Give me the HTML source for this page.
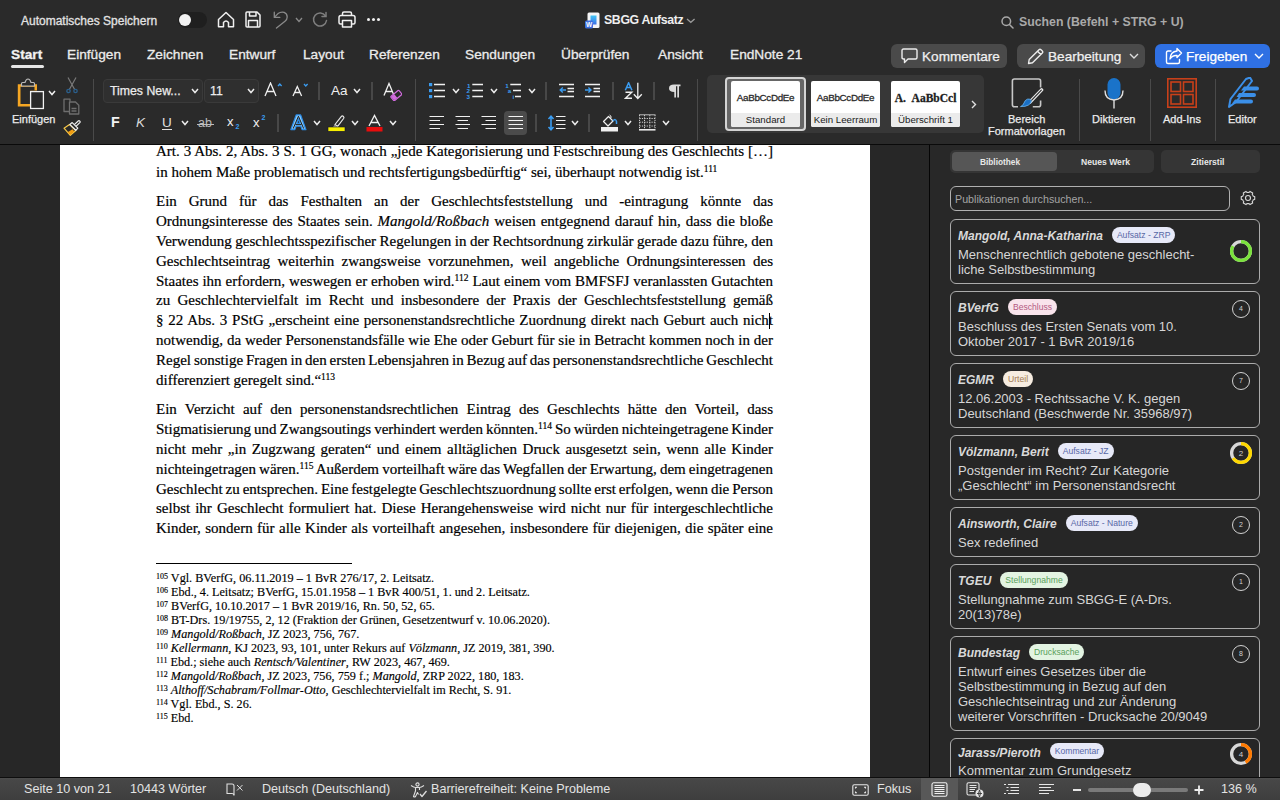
<!DOCTYPE html>
<html><head><meta charset="utf-8">
<style>
*{box-sizing:border-box;margin:0;padding:0}
html,body{width:1280px;height:800px;overflow:hidden;background:#282828;font-family:"Liberation Sans",sans-serif;color:#e6e6e6}
.abs{position:absolute}
#top{position:absolute;left:0;top:0;width:1280px;height:144px;background:#2a2a2a}
#blk{position:absolute;left:0;top:144px;width:1280px;height:1px;background:#0a0a0a}
#canvas{position:absolute;left:0;top:145px;width:929px;height:632px;background:#272727;overflow:hidden}
#page{position:absolute;left:60px;top:0;width:810px;height:640px;background:#fff;color:#000;font-family:"Liberation Serif",serif}
#sep{position:absolute;left:929px;top:145px;width:1px;height:632px;background:#050505}
#side{position:absolute;left:930px;top:145px;width:350px;height:632px;background:#282828;overflow:hidden}
#status{position:absolute;left:0;top:777px;width:1280px;height:23px;background:linear-gradient(#4d4d4d,#474747 2px,#3e3e3e);border-top:1px solid #0e0e0e}
.t{position:absolute;white-space:nowrap}
.ln{position:absolute;left:96px;width:617px;white-space:nowrap;font-size:15px;line-height:20px;height:20px;-webkit-text-stroke:.2px #000}
.j{text-align:justify;text-align-last:justify}
sup{font-size:9.5px;vertical-align:5px;line-height:0}
.fn{position:absolute;left:96px;white-space:nowrap;font-size:12.2px;line-height:14px;-webkit-text-stroke:.15px #000}
.fn sup{font-size:8px;vertical-align:3.5px}
.ui{font-family:"Liberation Sans",sans-serif}
.tab{top:47px;font-size:13.7px;color:#ececec;-webkit-text-stroke:.3px #ececec}
.btn{top:44px;height:24px;border-radius:6px;background:#4a4a4a}
.btxt{top:49px;-webkit-text-stroke:.25px currentColor;font-size:13.6px;color:#f0f0f0}
.rl{font-size:11px;color:#ececec;-webkit-text-stroke:.25px #ececec}
.vsep{position:absolute;width:1px;background:#4a4a4a}
.chev{fill:none;stroke:#ececec;stroke-width:1.5}
.sty{position:absolute;top:81px;width:69px;height:46px;background:#fff;border-radius:2px;overflow:hidden}
.sty .pv{position:absolute;left:0;top:10.5px;width:69px;text-align:center;font-size:9.8px;color:#2a2a2a;font-family:"Liberation Sans",sans-serif;letter-spacing:-0.3px;-webkit-text-stroke:.3px #2a2a2a}
.sty .lb{position:absolute;left:0;top:31.5px;width:69px;height:14.5px;background:#ebebeb;text-align:center;font-size:9.7px;line-height:14px;color:#1a1a1a;font-family:"Liberation Sans",sans-serif}
.sbt{font-size:8.6px;font-weight:bold;color:#e8e8e8;text-align:center;line-height:19px}
.card{position:absolute;width:310px;border:1.5px solid #ababab;border-radius:6px;background:#262626}
.auth{font-size:12px;font-weight:bold;font-style:italic;color:#d9d9d9;line-height:16px}
.badge{display:inline-block;vertical-align:top;margin-left:9px;margin-top:-1.5px;height:16.4px;line-height:16.4px;padding:0 5px;border-radius:8px;font-size:8.6px;font-weight:normal;font-style:normal}
.blue{background:#e7e9f8;color:#5767a6}
.pink{background:#f9e4ec;color:#b35a82}
.beige{background:#f6ece0;color:#a27b53}
.green{background:#e3f4e2;color:#59a05a}
.ctit{font-size:13px;color:#d6d6d6;line-height:15px}
.circ{position:absolute;width:18px;height:18px;border-radius:9px;border:1px solid #d2d2d2;font-size:7px;line-height:16px;text-align:center;color:#d2d2d2}
.stx{top:4px;font-size:12.6px;color:#e3e3e3;line-height:15px}
</style></head><body>
<div id="top">
<!-- title bar -->
<div class="t ui" style="left:21px;top:14px;font-size:12px;color:#e2e2e2;-webkit-text-stroke:.3px #e2e2e2">Automatisches Speichern</div>
<div class="abs" style="left:178px;top:12px;width:29px;height:16px;border-radius:8px;background:#1f1f1f"></div>
<div class="abs" style="left:179px;top:14px;width:12px;height:12px;border-radius:6px;background:#f2f2f2"></div>
<svg class="abs" style="left:217px;top:11px" width="18" height="17" viewBox="0 0 18 17" fill="none" stroke="#f0f0f0" stroke-width="1.5" stroke-linejoin="round"><path d="M1.5 8.5 L9 1.5 L16.5 8.5 V15.8 H11.5 V11.5 Q9 8.5 6.5 11.5 V15.8 H1.5 Z"/></svg>
<svg class="abs" style="left:245px;top:11px" width="16" height="17" viewBox="0 0 16 17" fill="none" stroke="#f0f0f0" stroke-width="1.5" stroke-linejoin="round"><path d="M1 2 Q1 1 2 1 H12 L15 4 V15 Q15 16 14 16 H2 Q1 16 1 15 Z"/><path d="M4.5 1 V5 H11 V1"/><path d="M3.5 16 V9.5 H12.5 V16"/></svg>
<svg class="abs" style="left:272px;top:11px" width="17" height="18" viewBox="0 0 17 18" fill="none" stroke="#8a8a8a" stroke-width="1.3" stroke-linecap="round" stroke-linejoin="round"><path d="M2.3 1.2 V6.4 H7.8"/><path d="M2.6 6.1 L6 2.6 Q9 0.4 12.2 1.4 Q15.2 2.8 15.2 6 Q15.2 8.6 13 10.2 L4.5 17"/></svg>
<svg class="abs" style="left:295px;top:17px" width="8" height="6" viewBox="0 0 8 6" fill="none" stroke="#8a8a8a" stroke-width="1.3"><path d="M1 1 L4 4.5 L7 1"/></svg>
<svg class="abs" style="left:312px;top:11px" width="16" height="17" viewBox="0 0 16 17" fill="none" stroke="#7e7e7e" stroke-width="1.5" stroke-linecap="round"><path d="M13.5 5 A6.5 6.5 0 1 0 14.5 9.5"/><path d="M14 1.5 V5.5 H10"/></svg>
<svg class="abs" style="left:338px;top:11px" width="18" height="17" viewBox="0 0 18 17" fill="none" stroke="#f0f0f0" stroke-width="1.5" stroke-linejoin="round"><path d="M4.5 4.5 V2.5 Q4.5 1 6 1 H12 Q13.5 1 13.5 2.5 V4.5"/><path d="M4 13 H2.5 Q1 13 1 11.5 V6.5 Q1 4.5 3 4.5 H15 Q17 4.5 17 6.5 V11.5 Q17 13 15.5 13 H14"/><path d="M4.5 9.5 H13.5 V16 H4.5 Z"/></svg>
<div class="abs" style="left:367px;top:18px;width:3px;height:3px;border-radius:2px;background:#f0f0f0;box-shadow:5px 0 0 #f0f0f0,10px 0 0 #f0f0f0"></div>
<svg class="abs" style="left:585px;top:12px" width="15" height="17" viewBox="0 0 15 17"><defs><linearGradient id="wg" x1="0" y1="0" x2="0" y2="1"><stop offset="0" stop-color="#41c6f5"/><stop offset="1" stop-color="#3a6ee8"/></linearGradient></defs><rect x="2.5" y="0.5" width="12" height="15.5" rx="1.5" fill="#f4f4f6"/><rect x="5.5" y="3.5" width="6" height="9" fill="url(#wg)"/><rect x="0" y="8.5" width="8" height="8" rx="1.5" fill="#3d6fe0"/><text x="4" y="15.3" font-size="6.5" font-family="Liberation Sans" font-weight="bold" fill="#fff" text-anchor="middle">W</text></svg>
<div class="t ui" style="left:604px;top:13px;font-size:12.3px;color:#efefef;font-weight:bold;letter-spacing:-0.35px">SBGG Aufsatz</div>
<svg class="abs" style="left:686px;top:17.5px" width="10" height="6" viewBox="0 0 10 6" fill="none" stroke="#9a9a9a" stroke-width="1.3"><path d="M1 1 L4.8 4.3 L8.6 1"/></svg>
<svg class="abs" style="left:1001px;top:15.5px" width="13" height="13" viewBox="0 0 13 13" fill="none" stroke="#a8a8a8" stroke-width="1.5" stroke-linecap="round"><circle cx="5.3" cy="5.3" r="4.3"/><path d="M8.5 8.5 L12 12"/></svg>
<div class="t ui" style="left:1019px;top:15px;font-size:12.3px;color:#a9a9a9;font-weight:bold">Suchen (Befehl + STRG + U)</div>
<!-- tabs -->
<div class="t ui tab" style="left:11px;font-weight:bold;color:#f4f4f4">Start</div>
<div class="abs" style="left:11px;top:65px;width:33px;height:3px;border-radius:2px;background:#e6e6e6"></div>
<div class="t ui tab" style="left:67px">Einfügen</div>
<div class="t ui tab" style="left:147px">Zeichnen</div>
<div class="t ui tab" style="left:229px">Entwurf</div>
<div class="t ui tab" style="left:303px">Layout</div>
<div class="t ui tab" style="left:369px">Referenzen</div>
<div class="t ui tab" style="left:465px">Sendungen</div>
<div class="t ui tab" style="left:561px">Überprüfen</div>
<div class="t ui tab" style="left:658px">Ansicht</div>
<div class="t ui tab" style="left:730px">EndNote 21</div>
<div class="abs btn" style="left:891px;width:116px"></div>
<svg class="abs" style="left:901px;top:48px" width="17" height="16" viewBox="0 0 17 16" fill="none" stroke="#ececec" stroke-width="1.4" stroke-linejoin="round"><path d="M2.5 1 H14.5 Q16 1 16 2.5 V9.5 Q16 11 14.5 11 H7 L3.5 14.5 V11 H2.5 Q1 11 1 9.5 V2.5 Q1 1 2.5 1 Z"/></svg>
<div class="t ui btxt" style="left:922px">Kommentare</div>
<div class="abs btn" style="left:1017px;width:128px"></div>
<svg class="abs" style="left:1027px;top:48px" width="17" height="17" viewBox="0 0 17 17" fill="none" stroke="#ececec" stroke-width="1.4" stroke-linejoin="round"><path d="M1.5 15.5 L2.2 11.5 L12 1.7 Q13 0.8 14 1.7 L15.3 3 Q16.2 4 15.3 5 L5.5 14.8 Z M10.5 3.2 L13.8 6.5"/></svg>
<div class="t ui btxt" style="left:1048px">Bearbeitung</div>
<svg class="abs" style="left:1129px;top:53px" width="10" height="7" viewBox="0 0 10 7" fill="none" stroke="#dcdcdc" stroke-width="1.4"><path d="M1 1 L5 5 L9 1"/></svg>
<div class="abs btn" style="left:1155px;width:115px;background:#2f70e3"></div>
<svg class="abs" style="left:1165px;top:47px" width="18" height="18" viewBox="0 0 18 18" fill="none" stroke="#fff" stroke-width="1.4" stroke-linejoin="round" stroke-linecap="round"><path d="M6 4 H3 Q1.5 4 1.5 5.5 V15 Q1.5 16.5 3 16.5 H13 Q14.5 16.5 14.5 15 V12.5"/><path d="M16.5 6 L12 1.5 V4 Q5.5 4.5 5 12 Q7.5 8 12 8.5 V10.5 Z"/></svg>
<div class="t ui btxt" style="left:1186px;color:#fff">Freigeben</div>
<!-- ribbon group 1: clipboard -->
<svg class="abs" style="left:15px;top:78px" width="31" height="32" viewBox="0 0 31 32" fill="none"><path d="M3 5.5 H7 V29 H3 Z" fill="none"/><path d="M2.8 6.2 H22 V12.5 H15.5 V28.5 H2.8 Z" fill="#f5a623" stroke="none"/><path d="M5.5 8.7 H19.5 V12.5 H15.5 V26 H5.5 Z" fill="#2a2a2a"/><path d="M6.5 8 V5.5 Q6.5 4.5 7.5 4.5 H10 Q11 1 13 1 Q15 1 16 4.5 H18.5 Q19.5 4.5 19.5 5.5 V8 Z" fill="#2a2a2a" stroke="#b8b8b8" stroke-width="1.2" stroke-linejoin="round"/><rect x="15.6" y="13.6" width="12.8" height="16.9" fill="#2a2a2a" stroke="#f2f2f2" stroke-width="1.3"/></svg>
<svg class="abs" style="left:48px;top:90px" width="8" height="6" viewBox="0 0 8 6" fill="none" stroke="#f0f0f0" stroke-width="1.5"><path d="M1 1 L4 4.5 L7 1"/></svg>
<div class="t ui rl" style="left:12px;top:113px">Einfügen</div>
<svg class="abs" style="left:65px;top:77px" width="14" height="17" viewBox="0 0 14 17" fill="none" stroke-width="1.2"><path d="M3 0.5 L9.5 12.3 M11 0.5 L4.5 12.3" stroke="#7a7a7a"/><circle cx="3.5" cy="14" r="1.7" stroke="#2b5f8c" stroke-width="1.3"/><circle cx="10.5" cy="14" r="1.7" stroke="#2b5f8c" stroke-width="1.3"/></svg>
<svg class="abs" style="left:63px;top:98px" width="17" height="17" viewBox="0 0 17 17" fill="none" stroke="#6e6e6e" stroke-width="1.3" stroke-linejoin="round"><path d="M7 3.5 V1.2 H1 V13.5 H6.5"/><path d="M6.5 4 H12.5 L15.8 7.3 V16 H6.5 Z M8.5 10.5 H13.5 M8.5 13 H13.5"/></svg>
<svg class="abs" style="left:62px;top:120px" width="20" height="17" viewBox="0 0 20 17"><path d="M2 8.2 L7.5 4.6 L13.8 10.5 L8.3 15.3 Z" fill="#2a2a2a" stroke="#f7c948" stroke-width="1.2" stroke-linejoin="round"/><path d="M5.5 12.2 L10.5 9.3 L12.3 11.6 L8.4 14.8 Z" fill="#f29d12"/><path d="M7.8 4.4 L10.2 2.6 L15.8 8.2 L13.8 10.3 Z" fill="#2a2a2a" stroke="#f0f0f0" stroke-width="1.2" stroke-linejoin="round"/><path d="M12.3 4.6 L16.2 1 Q17 0.4 17.8 1.1 Q18.5 1.9 17.8 2.7 L14 6.4" fill="none" stroke="#f0f0f0" stroke-width="1.2"/></svg>
<div class="vsep" style="left:93px;top:79px;height:62px"></div>
<!-- font group -->
<div class="abs" style="left:103px;top:79px;width:100px;height:24px;border-radius:4px;background:#2f2f2f;border:1px solid #3a3a3a"></div>
<div class="t ui" style="left:110px;top:84px;font-size:12.3px;color:#ececec;-webkit-text-stroke:.25px #ececec">Times New...</div>
<svg class="abs chev" style="left:191px;top:88px" width="8" height="6" viewBox="0 0 8 6"><path d="M1 1 L4 4.5 L7 1"/></svg>
<div class="abs" style="left:204px;top:79px;width:55px;height:24px;border-radius:4px;background:#2f2f2f;border:1px solid #3a3a3a"></div>
<div class="t ui" style="left:210px;top:84px;font-size:12.3px;color:#ececec;-webkit-text-stroke:.25px #ececec">11</div>
<svg class="abs chev" style="left:247px;top:88px" width="8" height="6" viewBox="0 0 8 6"><path d="M1 1 L4 4.5 L7 1"/></svg>
<svg class="abs" style="left:264px;top:82px" width="19" height="15" viewBox="0 0 19 15" fill="none" stroke-width="1.3"><path d="M1 14 L6.5 1 L12 14 M3 9.5 H10" stroke="#f0f0f0"/><path d="M14 4 L15.8 2 L17.6 4" stroke="#3b9cf0"/></svg>
<svg class="abs" style="left:292px;top:82px" width="17" height="15" viewBox="0 0 17 15" fill="none" stroke-width="1.3"><path d="M1 14 L5.3 4.5 L9.6 14 M2.8 10.5 H7.8" stroke="#f0f0f0"/><path d="M12 2 L13.8 4 L15.6 2" stroke="#3b9cf0"/></svg>
<div class="vsep" style="left:318px;top:82px;height:18px;width:2px;background:#484848"></div>
<div class="t ui" style="left:331px;top:83px;font-size:13.5px;color:#efefef">Aa</div>
<svg class="abs chev" style="left:353px;top:88px" width="8" height="6" viewBox="0 0 8 6"><path d="M1 1 L4 4.5 L7 1"/></svg>
<div class="vsep" style="left:371px;top:82px;height:18px;width:2px;background:#484848"></div>
<svg class="abs" style="left:383px;top:82px" width="19" height="19" viewBox="0 0 19 19" fill="none"><path d="M1 13.5 L6 1.5 L11 13.5 M2.8 9.5 H9" stroke="#f0f0f0" stroke-width="1.3"/><g transform="rotate(-40 13 13.5)"><rect x="8" y="11" width="10.5" height="5.5" rx="0.8" fill="#2a2a2a" stroke="#d26be0" stroke-width="1.2"/><rect x="8.5" y="11.5" width="4" height="4.5" fill="#d26be0"/></g></svg>
<!-- row 2 -->
<div class="t ui" style="left:111px;top:114px;font-size:14.3px;font-weight:bold;color:#f2f2f2">F</div>
<div class="t ui" style="left:136px;top:114.5px;font-size:13.5px;font-style:italic;color:#d8d8d8">K</div>
<div class="t ui" style="left:162px;top:114.5px;font-size:13.5px;color:#e0e0e0">U</div>
<div class="abs" style="left:162px;top:128.5px;width:10px;height:1.3px;background:#e0e0e0"></div>
<svg class="abs chev" style="left:181px;top:120px" width="8" height="6" viewBox="0 0 8 6"><path d="M1 1 L4 4.5 L7 1"/></svg>
<div class="t ui" style="left:198px;top:116px;font-size:12.5px;color:#bdbdbd">ab</div>
<div class="abs" style="left:197px;top:123.5px;width:17px;height:1.2px;background:#bdbdbd"></div>
<div class="t ui" style="left:227px;top:114px;font-size:13px;color:#f2f2f2">x</div>
<div class="t ui" style="left:235.5px;top:123px;font-size:7px;color:#3b9cf0;font-weight:bold">2</div>
<div class="t ui" style="left:253px;top:115px;font-size:13px;color:#f2f2f2">x</div>
<div class="t ui" style="left:261.5px;top:113.5px;font-size:7px;color:#3b9cf0;font-weight:bold">2</div>
<div class="vsep" style="left:277px;top:114px;height:18px;width:2px;background:#484848"></div>
<svg class="abs" style="left:290px;top:114px" width="17" height="17" viewBox="0 0 17 17"><path d="M0.9 15.6 L6.2 0.9 H10.6 L15.9 15.6 H12.1 L10.9 12.2 H6 L4.8 15.6 Z M6.9 9.3 H10 L8.45 4.6 Z" fill="#8ccdfc" fill-rule="evenodd" stroke="#2b8be6" stroke-width="1.3" stroke-linejoin="round"/><path d="M3.2 14.6 L8.45 2.2 L13.7 14.6 M5.4 10.6 H11.5" fill="none" stroke="#1c1c1c" stroke-width="1"/></svg>
<svg class="abs chev" style="left:313px;top:120px" width="8" height="6" viewBox="0 0 8 6"><path d="M1 1 L4 4.5 L7 1"/></svg>
<svg class="abs" style="left:327px;top:114px" width="19" height="18" viewBox="0 0 19 18"><path d="M8 10.5 L14.2 2.6 Q15.2 1.5 16.4 2.4 Q17.4 3.4 16.6 4.5 L10.6 12.3 Z" fill="#2a2a2a" stroke="#e8e8e8" stroke-width="1.2" stroke-linejoin="round"/><path d="M7.8 10.8 L10.4 12.6 L8.6 14 L5 14 Z" fill="#9a9a9a"/><rect x="1" y="13" width="17" height="4.3" fill="#f7ef00" stroke="#15152a" stroke-width="0.6"/></svg>
<svg class="abs chev" style="left:351px;top:120px" width="8" height="6" viewBox="0 0 8 6"><path d="M1 1 L4 4.5 L7 1"/></svg>
<svg class="abs" style="left:366px;top:114px" width="17" height="18" viewBox="0 0 17 18"><path d="M3 12 L8.5 1.5 L14 12 M5 8.5 H12" fill="none" stroke="#f0f0f0" stroke-width="1.3"/><rect x="0.5" y="13" width="16" height="4.5" fill="#e80c0c"/></svg>
<svg class="abs chev" style="left:389px;top:120px" width="8" height="6" viewBox="0 0 8 6"><path d="M1 1 L4 4.5 L7 1"/></svg>
<div class="vsep" style="left:415px;top:79px;height:62px"></div>
<!-- paragraph group -->
<svg class="abs" style="left:429px;top:83px" width="17" height="16" viewBox="0 0 17 16"><g fill="#3b9cf0"><rect x="0" y="0" width="3.2" height="3.2"/><rect x="0" y="6" width="3.2" height="3.2"/><rect x="0" y="12" width="3.2" height="3.2"/></g><g stroke="#f0f0f0" stroke-width="1.3"><path d="M5 1.5 H16 M5 7.5 H16 M5 13.5 H16"/></g></svg>
<svg class="abs chev" style="left:452px;top:88px" width="8" height="6" viewBox="0 0 8 6"><path d="M1 1 L4 4.5 L7 1"/></svg>
<svg class="abs" style="left:466px;top:82px" width="18" height="18" viewBox="0 0 18 18"><g font-size="6.2" font-family="Liberation Sans" font-weight="bold" fill="#3b9cf0"><text x="1" y="5.6">1</text><text x="0.6" y="11.4">2</text><text x="0.6" y="17.2">3</text></g><g stroke="#f0f0f0" stroke-width="1.3"><path d="M6.3 2.5 H17 M6.3 8.5 H17 M6.3 14.5 H17"/></g></svg>
<svg class="abs chev" style="left:490px;top:88px" width="8" height="6" viewBox="0 0 8 6"><path d="M1 1 L4 4.5 L7 1"/></svg>
<svg class="abs" style="left:504px;top:82px" width="18" height="18" viewBox="0 0 18 18"><g font-size="6.2" font-family="Liberation Sans" font-weight="bold" fill="#3b9cf0"><text x="1.2" y="5.6">1</text><text x="3.8" y="11.2">a</text><text x="8.6" y="17.2">i</text></g><g stroke="#f0f0f0" stroke-width="1.3"><path d="M6.3 2.5 H17 M9 8.5 H17 M11 14.5 H17"/></g></svg>
<svg class="abs chev" style="left:528px;top:88px" width="8" height="6" viewBox="0 0 8 6"><path d="M1 1 L4 4.5 L7 1"/></svg>
<div class="vsep" style="left:545px;top:82px;height:18px;width:2px;background:#484848"></div>
<svg class="abs" style="left:559px;top:83px" width="16" height="15" viewBox="0 0 16 15" fill="none"><g stroke="#f0f0f0" stroke-width="1.3"><path d="M0 1.5 H15 M8.5 5.5 H15 M8.5 8.5 H15 M0 13.5 H15"/></g><path d="M7 7 H1.2 M3.8 4.4 L1.2 7 L3.8 9.6" stroke="#3b9cf0" stroke-width="1.4"/></svg>
<svg class="abs" style="left:585px;top:83px" width="16" height="15" viewBox="0 0 16 15" fill="none"><g stroke="#f0f0f0" stroke-width="1.3"><path d="M0 1.5 H15 M8.5 5.5 H15 M8.5 8.5 H15 M0 13.5 H15"/></g><path d="M0 7 H6 M3.4 4.4 L6 7 L3.4 9.6" stroke="#3b9cf0" stroke-width="1.4"/></svg>
<div class="vsep" style="left:612px;top:82px;height:18px;width:2px;background:#484848"></div>
<svg class="abs" style="left:624px;top:82px" width="19" height="18" viewBox="0 0 19 18" fill="none"><path d="M1.3 8.3 L4.6 0.8 L7.9 8.3 M2.5 5.6 H6.7" stroke="#3b9cf0" stroke-width="1.5"/><path d="M1.5 10.2 H7.8 L1.5 16.3 H8" stroke="#f0f0f0" stroke-width="1.4"/><path d="M13.8 0.8 V16.5 M9.8 12.3 L13.8 16.5 L17.8 12.3" stroke="#f0f0f0" stroke-width="1.3"/></svg>
<div class="vsep" style="left:653px;top:82px;height:18px;width:2px;background:#484848"></div>
<svg class="abs" style="left:668px;top:84px" width="13" height="14" viewBox="0 0 13 14"><path d="M6 0.5 H12.5 V2.2 H11 V13.5 H9.3 V2.2 H8 V13.5 H6.3 V8 Q1 8 1 4.2 Q1 0.5 6 0.5 Z" fill="#dcdcdc"/></svg>
<!-- row 2 -->
<svg class="abs" style="left:429px;top:115px" width="16" height="15" viewBox="0 0 16 15" stroke="#f0f0f0" stroke-width="1.2"><path d="M0.5 1.5 H15 M0.5 5.5 H11 M0.5 9.5 H15 M0.5 13.5 H11"/></svg>
<svg class="abs" style="left:455px;top:115px" width="16" height="15" viewBox="0 0 16 15" stroke="#f0f0f0" stroke-width="1.2"><path d="M0.5 1.5 H15 M2.5 5.5 H13 M0.5 9.5 H15 M2.5 13.5 H13"/></svg>
<svg class="abs" style="left:481px;top:115px" width="16" height="15" viewBox="0 0 16 15" stroke="#f0f0f0" stroke-width="1.2"><path d="M0.5 1.5 H15 M4.5 5.5 H15 M0.5 9.5 H15 M4.5 13.5 H15"/></svg>
<div class="abs" style="left:504px;top:111px;width:23px;height:24px;border-radius:4px;background:#4b4b4b"></div>
<svg class="abs" style="left:508px;top:115px" width="16" height="15" viewBox="0 0 16 15" stroke="#f4f4f4" stroke-width="1.2"><path d="M0.5 1.5 H15 M0.5 5.5 H15 M0.5 9.5 H15 M0.5 13.5 H15"/></svg>
<div class="vsep" style="left:535px;top:114px;height:18px;width:2px;background:#484848"></div>
<svg class="abs" style="left:547px;top:115px" width="19" height="16" viewBox="0 0 19 16" fill="none"><path d="M4 1.5 V14.5 M1.5 4 L4 1.2 L6.5 4 M1.5 12 L4 14.8 L6.5 12" stroke="#3b9cf0" stroke-width="1.6"/><g stroke="#f0f0f0" stroke-width="1.2"><path d="M9 1.5 H18.5 M9 5.5 H18.5 M9 9.5 H18.5 M9 13.5 H18.5"/></g></svg>
<svg class="abs chev" style="left:571px;top:120px" width="8" height="6" viewBox="0 0 8 6"><path d="M1 1 L4 4.5 L7 1"/></svg>
<div class="vsep" style="left:588px;top:114px;height:18px;width:2px;background:#484848"></div>
<svg class="abs" style="left:600px;top:114px" width="19" height="18" viewBox="0 0 19 18" fill="none"><path d="M3.5 7.5 L8.5 2.5 L13 7 L8 12 Z" stroke="#f0f0f0" stroke-width="1.2" stroke-linejoin="round"/><path d="M9.5 1 Q11.5 1.5 11 4" stroke="#f0f0f0" stroke-width="1"/><path d="M13 7 Q15.5 4 16.5 7.5 V10" stroke="#3b9cf0" stroke-width="1.5"/><rect x="1" y="13" width="17" height="4.5" fill="#f0f0f0"/></svg>
<svg class="abs chev" style="left:624px;top:120px" width="8" height="6" viewBox="0 0 8 6"><path d="M1 1 L4 4.5 L7 1"/></svg>
<svg class="abs" style="left:639px;top:114px" width="17" height="17" viewBox="0 0 17 17" fill="none"><g stroke="#cfcfcf" stroke-width="1" stroke-dasharray="1.2 1.2"><path d="M0.5 1 V15 M16 1 V15 M5.5 1 V15 M10.8 1 V15 M0.5 4.5 H16 M0.5 12 H16"/></g><path d="M0.5 1 H16 M0.5 8 H16 M8.3 1 V15" stroke="#cfcfcf" stroke-width="0"/><path d="M0.5 8.2 H16" stroke="#d8d8d8" stroke-width="1" stroke-dasharray="1.2 1.2"/><path d="M0 0.8 H16.5" stroke="#bdbdbd" stroke-width="1"/><path d="M0 15.8 H16.5" stroke="#f4f4f4" stroke-width="1.5"/></svg>
<svg class="abs chev" style="left:662px;top:120px" width="8" height="6" viewBox="0 0 8 6"><path d="M1 1 L4 4.5 L7 1"/></svg>
<div class="vsep" style="left:697px;top:79px;height:62px"></div>
<!-- styles gallery -->
<div class="abs" style="left:707px;top:75px;width:277px;height:58px;border-radius:5px;background:#373737"></div>
<div class="abs" style="left:725px;top:77px;width:81px;height:54px;border-radius:4px;border:2px solid #d4d4d4;background:#666"></div>
<div class="sty" style="left:731px"><div class="pv">AaBbCcDdEe</div><div class="lb">Standard</div></div>
<div class="sty" style="left:811px"><div class="pv">AaBbCcDdEe</div><div class="lb">Kein Leerraum</div></div>
<div class="sty" style="left:891px"><div class="pv" style="font-family:'Liberation Serif',serif;font-weight:bold;font-size:11.5px;color:#1a1a1a;letter-spacing:0">A.&nbsp;&nbsp;AaBbCcl</div><div class="lb">Überschrift 1</div></div>
<svg class="abs" style="left:971px;top:100px" width="6" height="9" viewBox="0 0 6 9" fill="none" stroke="#e0e0e0" stroke-width="1.4"><path d="M1 1 L4.5 4.5 L1 8"/></svg>
<!-- right big buttons -->
<svg class="abs" style="left:1011px;top:78px" width="33" height="31" viewBox="0 0 33 31" fill="none"><path d="M29.6 9.5 V3 Q29.6 1 27.6 1 H3.4 Q1.4 1 1.4 3 V26.8 Q1.4 28.8 3.4 28.8 H7 M21.8 28.8 H27.6 Q29.6 28.8 29.6 26.8 V22.6" stroke="#c8c8c8" stroke-width="1.6"/><path d="M30.6 11.9 L18.8 24.2" stroke="#e8e8e8" stroke-width="3.4" stroke-linecap="round"/><path d="M30.3 12.2 L18.8 24.2" stroke="#2a2a2a" stroke-width="1.1" stroke-linecap="round"/><path d="M9.5 28.6 Q14.5 28.8 17.5 27 Q20.8 25 20.2 22.6 Q19.2 20.2 16.3 21.2 Q13.8 22.2 13 25 Q12.2 27.6 9.5 28.6 Z" fill="#1a6fc4" stroke="#6ab8f5" stroke-width="0.8"/></svg>
<div class="t ui rl" style="left:1008px;top:113px">Bereich</div>
<div class="t ui rl" style="left:988px;top:125px">Formatvorlagen</div>
<div class="vsep" style="left:1079px;top:79px;height:62px"></div>
<svg class="abs" style="left:1104px;top:77px" width="20" height="32" viewBox="0 0 20 32" fill="none"><rect x="3.5" y="1" width="13" height="21.5" rx="6.5" fill="#1a73c9"/><path d="M1 13.5 Q1 22.5 10 23 Q19 22.5 19 13.5" stroke="#e0e0e0" stroke-width="1.4"/><path d="M10 23 V31.5" stroke="#e0e0e0" stroke-width="1.4"/></svg>
<div class="t ui rl" style="left:1092px;top:113px">Diktieren</div>
<div class="vsep" style="left:1150px;top:79px;height:62px"></div>
<svg class="abs" style="left:1167px;top:78px" width="30" height="30" viewBox="0 0 30 30" fill="none" stroke="#c8401a" stroke-width="1.6"><rect x="0.8" y="0.8" width="28.4" height="28.4"/><rect x="4" y="4" width="9.5" height="9.5"/><rect x="16.5" y="4" width="9.5" height="9.5"/><rect x="4" y="16.5" width="9.5" height="9.5"/><rect x="16.5" y="16.5" width="9.5" height="9.5"/></svg>
<div class="t ui rl" style="left:1163px;top:113px">Add-Ins</div>
<div class="vsep" style="left:1215px;top:79px;height:62px"></div>
<svg class="abs" style="left:1227px;top:77px" width="33" height="32" viewBox="0 0 33 32"><path d="M19 2 L23 0.5 L25 4 L9 25 L2 30 L3.5 22 Z" fill="none" stroke="#3b8fe8" stroke-width="2" stroke-linejoin="round"/><path d="M17 9.5 H30 Q32 9.5 32 11.5 Q32 13.5 30 13.5 H14 Z M12 16 H27 Q29 16 29 18 Q29 20 27 20 H9.5 Z M8 22.5 H24 Q26 22.5 26 24.5 Q26 26.5 24 26.5 H5 Z" fill="#3b8fe8"/></svg>
<div class="t ui rl" style="left:1228px;top:113px">Editor</div>

<svg class="abs" style="left:1254px;top:53px" width="10" height="7" viewBox="0 0 10 7" fill="none" stroke="#fff" stroke-width="1.4"><path d="M1 1 L5 5 L9 1"/></svg>

</div>
<div id="blk"></div>
<div id="canvas">
 <div id="page">
<div class="ln j" style="top:-4.0px">Art. 3 Abs. 2, Abs. 3 S. 1 GG, wonach „jede Kategorisierung und Festschreibung des Geschlechts […]</div>
<div class="ln" style="top:16.6px">in hohem Maße problematisch und rechtsfertigungsbedürftig“ sei, überhaupt notwendig ist.<sup>111</sup></div>
<div class="ln j" style="top:46.3px">Ein Grund für das Festhalten an der Geschlechtsfeststellung und -eintragung könnte das</div>
<div class="ln j" style="top:66.1px">Ordnungsinteresse des Staates sein. <i>Mangold/Roßbach</i> weisen entgegnend darauf hin, dass die bloße</div>
<div class="ln j" style="word-spacing:-0.30px;top:85.9px">Verwendung geschlechtsspezifischer Regelungen in der Rechtsordnung zirkulär gerade dazu führe, den</div>
<div class="ln j" style="top:105.7px">Geschlechtseintrag weiterhin zwangsweise vorzunehmen, weil angebliche Ordnungsinteressen des</div>
<div class="ln j" style="top:125.5px">Staates ihn erfordern, weswegen er erhoben wird.<sup>112</sup> Laut einem vom BMFSFJ veranlassten Gutachten</div>
<div class="ln j" style="top:145.3px">zu Geschlechtervielfalt im Recht und insbesondere der Praxis der Geschlechtsfeststellung gemäß</div>
<div class="ln j" style="top:165.1px">§ 22 Abs. 3 PStG „erscheint eine personenstandsrechtliche Zuordnung direkt nach Geburt auch nicht</div>
<div class="ln j" style="top:184.9px">notwendig, da weder Personenstandsfälle wie Ehe oder Geburt für sie in Betracht kommen noch in der</div>
<div class="ln j" style="word-spacing:-0.93px;top:204.7px">Regel sonstige Fragen in den ersten Lebensjahren in Bezug auf das personenstandsrechtliche Geschlecht</div>
<div class="ln" style="top:224.5px">differenziert geregelt sind.“<sup>113</sup></div>
<div class="ln j" style="top:254.3px">Ein Verzicht auf den personenstandsrechtlichen Eintrag des Geschlechts hätte den Vorteil, dass</div>
<div class="ln j" style="word-spacing:-0.88px;top:274.1px">Stigmatisierung und Zwangsoutings verhindert werden könnten.<sup>114</sup> So würden nichteingetragene Kinder</div>
<div class="ln j" style="top:293.9px">nicht mehr „in Zugzwang geraten“ und einem alltäglichen Druck ausgesetzt sein, wenn alle Kinder</div>
<div class="ln j" style="word-spacing:-0.70px;top:313.7px">nichteingetragen wären.<sup>115</sup> Außerdem vorteilhaft wäre das Wegfallen der Erwartung, dem eingetragenen</div>
<div class="ln j" style="word-spacing:-0.92px;top:333.5px">Geschlecht zu entsprechen. Eine festgelegte Geschlechtszuordnung sollte erst erfolgen, wenn die Person</div>
<div class="ln j" style="top:353.3px">selbst ihr Geschlecht formuliert hat. Diese Herangehensweise wird nicht nur für intergeschlechtliche</div>
<div class="ln j" style="top:373.1px">Kinder, sondern für alle Kinder als vorteilhaft angesehen, insbesondere für diejenigen, die später eine</div>
<div class="abs" style="left:96px;top:418px;width:196px;height:1px;background:#000"></div>
<div class="abs" style="left:709px;top:168px;width:1px;height:16px;background:#000"></div>
<div class="fn" style="top:426.0px"><sup>105</sup> Vgl. BVerfG, 06.11.2019 – 1 BvR 276/17, 2. Leitsatz.</div>
<div class="fn" style="top:440.0px"><sup>106</sup> Ebd., 4. Leitsatz; BVerfG, 15.01.1958 – 1 BvR 400/51, 1. und 2. Leitsatz.</div>
<div class="fn" style="top:453.9px"><sup>107</sup> BVerfG, 10.10.2017 – 1 BvR 2019/16, Rn. 50, 52, 65.</div>
<div class="fn" style="top:467.9px"><sup>108</sup> BT-Drs. 19/19755, 2, 12 (Fraktion der Grünen, Gesetzentwurf v. 10.06.2020).</div>
<div class="fn" style="top:481.9px"><sup>109</sup> <i>Mangold/Roßbach</i>, JZ 2023, 756, 767.</div>
<div class="fn" style="top:495.9px"><sup>110</sup> <i>Kellermann</i>, KJ 2023, 93, 101, unter Rekurs auf <i>Völzmann</i>, JZ 2019, 381, 390.</div>
<div class="fn" style="top:509.8px"><sup>111</sup> Ebd.; siehe auch <i>Rentsch/Valentiner</i>, RW 2023, 467, 469.</div>
<div class="fn" style="top:523.8px"><sup>112</sup> <i>Mangold/Roßbach</i>, JZ 2023, 756, 759 f.; <i>Mangold</i>, ZRP 2022, 180, 183.</div>
<div class="fn" style="top:537.8px"><sup>113</sup> <i>Althoff/Schabram/Follmar-Otto,</i> Geschlechtervielfalt im Recht, S. 91.</div>
<div class="fn" style="top:551.7px"><sup>114</sup> Vgl. Ebd., S. 26.</div>
<div class="fn" style="top:565.7px"><sup>115</sup> Ebd.</div>
 </div>
</div>
<div id="sep"></div>
<div id="side">
<div class="abs" style="left:20px;top:5px;width:204px;height:23px;border-radius:5px;background:#353535"></div>
<div class="abs" style="left:22px;top:7px;width:105px;height:19px;border-radius:4px;background:#565656"></div>
<div class="t sbt" style="left:50px;top:8px;font-size:8.3px;text-align:left">Bibliothek</div>
<div class="t sbt" style="left:127px;width:97px;top:8px">Neues Werk</div>
<div class="abs" style="left:231px;top:5px;width:99px;height:23px;border-radius:5px;background:#353535"></div>
<div class="t sbt" style="left:261px;top:8px;text-align:left">Zitierstil</div>
<div class="abs" style="left:20px;top:41px;width:280px;height:25px;border-radius:6px;border:1.5px solid #b0b0b0;background:#262626"></div>
<div class="t" style="left:25px;top:48px;font-size:10.7px;color:#a4a4a4">Publikationen durchsuchen...</div>
<svg class="abs" style="left:310px;top:45px" width="16" height="16" viewBox="0 0 16 16" fill="none" stroke="#d8d8d8" stroke-width="1.1" stroke-linejoin="round"><path d="M12.85 5.20 L13.29 6.18 L14.72 6.45 L14.72 9.55 L13.29 9.82 L12.85 10.80 L12.23 11.67 L12.71 13.05 L10.02 14.60 L9.07 13.50 L8.00 13.60 L6.93 13.50 L5.98 14.60 L3.29 13.05 L3.77 11.67 L3.15 10.80 L2.71 9.82 L1.28 9.55 L1.28 6.45 L2.71 6.18 L3.15 5.20 L3.77 4.33 L3.29 2.95 L5.98 1.40 L6.93 2.50 L8.00 2.40 L9.07 2.50 L10.02 1.40 L12.71 2.95 L12.23 4.33 Z"/><circle cx="8" cy="8" r="2.5"/></svg>
<div class="card" style="left:20px;top:74px;height:65px"></div>
<div class="t auth" style="left:28px;top:83px">Mangold, Anna-Katharina<span class="badge blue">Aufsatz - ZRP</span></div>
<div class="t ctit" style="left:28px;top:102px">Menschenrechtlich gebotene geschlecht-</div>
<div class="t ctit" style="left:28px;top:117px">liche Selbstbestimmung</div>
<svg class="abs" style="left:299px;top:94.3px" width="24" height="24" viewBox="0 0 24 24"><circle cx="12" cy="12" r="9.4" fill="none" stroke="#d8d8d8" stroke-width="3.3"/><circle cx="12" cy="12" r="9.4" fill="none" stroke="#7be23c" stroke-width="3.3" stroke-dasharray="49.22 59.06" transform="rotate(-90 12 12)"/></svg>
<div class="card" style="left:20px;top:146px;height:65px"></div>
<div class="t auth" style="left:28px;top:155px">BVerfG<span class="badge pink">Beschluss</span></div>
<div class="t ctit" style="left:28px;top:174px">Beschluss des Ersten Senats vom 10.</div>
<div class="t ctit" style="left:28px;top:189px">Oktober 2017 - 1 BvR 2019/16</div>
<div class="abs circ" style="left:302px;top:155.4px">4</div>
<div class="card" style="left:20px;top:218px;height:65px"></div>
<div class="t auth" style="left:28px;top:227px">EGMR<span class="badge beige">Urteil</span></div>
<div class="t ctit" style="left:28px;top:246px">12.06.2003 - Rechtssache V. K. gegen</div>
<div class="t ctit" style="left:28px;top:261px">Deutschland (Beschwerde Nr. 35968/97)</div>
<div class="abs circ" style="left:302px;top:227.4px">7</div>
<div class="card" style="left:20px;top:290px;height:65px"></div>
<div class="t auth" style="left:28px;top:299px">Völzmann, Berit<span class="badge blue">Aufsatz - JZ</span></div>
<div class="t ctit" style="left:28px;top:318px">Postgender im Recht? Zur Kategorie</div>
<div class="t ctit" style="left:28px;top:333px">„Geschlecht“ im Personenstandsrecht</div>
<svg class="abs" style="left:299px;top:296.4px" width="24" height="24" viewBox="0 0 24 24"><circle cx="12" cy="12" r="9.4" fill="none" stroke="#d8d8d8" stroke-width="3.3"/><circle cx="12" cy="12" r="9.4" fill="none" stroke="#ffd800" stroke-width="3.3" stroke-dasharray="38.55 59.06" transform="rotate(-90 12 12)"/><text x="12" y="14.8" font-size="8" text-anchor="middle" fill="#cfcfcf" font-family="Liberation Sans">2</text></svg>
<div class="card" style="left:20px;top:362px;height:50px"></div>
<div class="t auth" style="left:28px;top:371px">Ainsworth, Claire<span class="badge blue">Aufsatz - Nature</span></div>
<div class="t ctit" style="left:28px;top:390px">Sex redefined</div>
<div class="abs circ" style="left:302px;top:371.4px">2</div>
<div class="card" style="left:20px;top:419px;height:65px"></div>
<div class="t auth" style="left:28px;top:428px">TGEU<span class="badge green">Stellungnahme</span></div>
<div class="t ctit" style="left:28px;top:447px">Stellungnahme zum SBGG-E (A-Drs.</div>
<div class="t ctit" style="left:28px;top:462px">20(13)78e)</div>
<div class="abs circ" style="left:302px;top:428.4px">1</div>
<div class="card" style="left:20px;top:491px;height:95px"></div>
<div class="t auth" style="left:28px;top:500px">Bundestag<span class="badge green">Drucksache</span></div>
<div class="t ctit" style="left:28px;top:519px">Entwurf eines Gesetzes über die</div>
<div class="t ctit" style="left:28px;top:534px">Selbstbestimmung in Bezug auf den</div>
<div class="t ctit" style="left:28px;top:549px">Geschlechtseintrag und zur Änderung</div>
<div class="t ctit" style="left:28px;top:564px">weiterer Vorschriften - Drucksache 20/9049</div>
<div class="abs circ" style="left:302px;top:500.4px">8</div>
<div class="card" style="left:20px;top:593px;height:65px"></div>
<div class="t auth" style="left:28px;top:599.5px">Jarass/Pieroth<span class="badge blue">Kommentar</span></div>
<div class="t ctit" style="left:28px;top:618.0px">Kommentar zum Grundgesetz</div>
<svg class="abs" style="left:299px;top:596.5px" width="24" height="24" viewBox="0 0 24 24"><circle cx="12" cy="12" r="9.4" fill="none" stroke="#d8d8d8" stroke-width="3.3"/><circle cx="12" cy="12" r="9.4" fill="none" stroke="#ff7a00" stroke-width="3.3" stroke-dasharray="24.61 59.06" transform="rotate(-90 12 12)"/><text x="12" y="14.8" font-size="8" text-anchor="middle" fill="#cfcfcf" font-family="Liberation Sans">4</text></svg>
</div>
<div id="status">
<div class="t stx" style="left:24px">Seite 10 von 21</div>
<div class="t stx" style="left:130px">10443 Wörter</div>
<svg class="abs" style="left:226px;top:5px" width="18" height="13" viewBox="0 0 18 13" fill="none" stroke="#dedede" stroke-width="1.1"><path d="M1 1 H6 Q8 1 8 3 V12 Q7.5 10.5 6 10.5 H1 Z M8 3 V12"/><path d="M11 2 L16.5 7.5 M16.5 2 L11 7.5" stroke-width="1"/><path d="M8 11.5 L8 12.5"/></svg>
<div class="t stx" style="left:262px">Deutsch (Deutschland)</div>
<svg class="abs" style="left:410px;top:4px" width="18" height="16" viewBox="0 0 18 16" fill="none" stroke="#dedede" stroke-width="1.1" stroke-linejoin="round"><circle cx="7.5" cy="2.5" r="1.6"/><path d="M1 3.5 Q4 5.5 5.5 5.5 H9.5 Q11 5.5 14 3.5 M5.5 5.5 V9 L3.5 14.5 Q4.5 15.5 5.5 14.5 L7.5 10.5 L8.5 12.5 M9.5 5.5 V8"/><path d="M10 12 L12 14.5 L16.5 9" stroke-width="1.3"/></svg>
<div class="t stx" style="left:431px">Barrierefreiheit: Keine Probleme</div>
<svg class="abs" style="left:852px;top:6px" width="17" height="12" viewBox="0 0 17 12" fill="none" stroke="#e6e6e6" stroke-width="1.1"><rect x="0.8" y="0.8" width="15.4" height="10.4" rx="1.5"/><path d="M3.5 4.5 V3.2 H5 M12 3.2 H13.5 V4.5 M13.5 7.5 V8.8 H12 M5 8.8 H3.5 V7.5"/></svg>
<div class="t stx" style="left:877px">Fokus</div>
<div class="abs" style="left:921px;top:0px;width:37px;height:23px;background:#585858"></div>
<svg class="abs" style="left:931px;top:4px" width="17" height="15" viewBox="0 0 17 15" fill="none" stroke="#f0f0f0" stroke-width="1.1"><rect x="1" y="0.8" width="15" height="13.4" rx="1.8"/><path d="M3.5 3.5 H13.5 M3.5 5.5 H13.5 M3.5 7.5 H13.5 M3.5 9.5 H13.5 M3.5 11.5 H13.5"/></svg>
<svg class="abs" style="left:966px;top:4px" width="19" height="16" viewBox="0 0 19 16" fill="none" stroke="#e6e6e6" stroke-width="1.1"><path d="M10 13 H2.5 Q1 13 1 11.5 V2.3 Q1 0.8 2.5 0.8 H11.5 Q13 0.8 13 2.3 V8"/><path d="M3.5 3.5 H10.5 M3.5 5.5 H10.5 M3.5 7.5 H9 M3.5 9.5 H8"/><circle cx="13.5" cy="11.5" r="4" fill="#e6e6e6" stroke="none"/><path d="M11 11.5 H16 M13.5 8 Q11.5 11.5 13.5 15 Q15.5 11.5 13.5 8" stroke="#3a3a3a" stroke-width="0.9"/></svg>
<svg class="abs" style="left:1003px;top:5px" width="17" height="13" viewBox="0 0 17 13" fill="none" stroke="#e6e6e6" stroke-width="1.1"><path d="M1 1.5 H3 M5 1.5 H16 M3.5 4.5 H5.5 M7.5 4.5 H16 M3.5 7.5 H5.5 M7.5 7.5 H16 M1 10.5 H3 M5 10.5 H16"/></svg>
<svg class="abs" style="left:1038px;top:5px" width="17" height="13" viewBox="0 0 17 13" fill="none" stroke="#e6e6e6" stroke-width="1.1"><path d="M1 1.5 H16 M1 4.5 H13 M1 7.5 H16 M1 10.5 H11"/></svg>
<div class="abs" style="left:1073px;top:11px;width:8px;height:2px;background:#e6e6e6"></div>
<div class="abs" style="left:1088px;top:10px;width:100px;height:4px;border-radius:2px;background:#7a7a7a"></div>
<div class="abs" style="left:1133px;top:4.5px;width:18px;height:14px;border-radius:7px;background:#ececec"></div>
<svg class="abs" style="left:1194px;top:7px" width="10" height="10" viewBox="0 0 10 10" stroke="#eeeeee" stroke-width="1.8"><path d="M5 0.5 V9.5 M0.5 5 H9.5"/></svg>
<div class="t stx" style="left:1221px">136 %</div>
</div>
</body></html>
